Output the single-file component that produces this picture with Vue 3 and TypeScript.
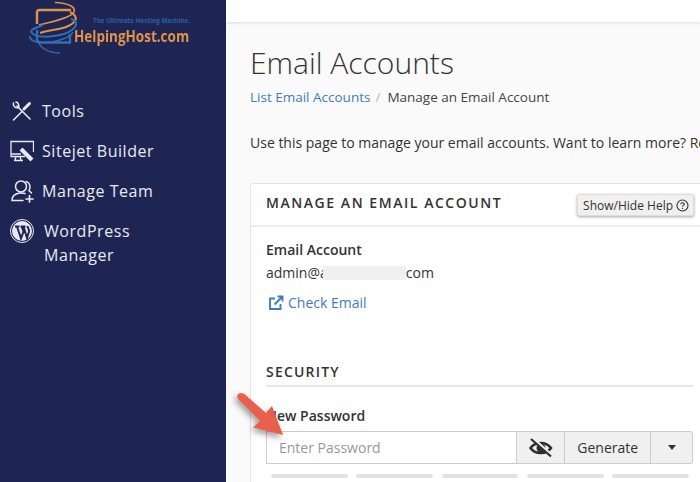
<script setup lang="ts">
const bars: number[] = [1, 2, 3, 4, 5]
</script>

<template>
  <div class="page">
    <aside class="sidebar">
      <div class="logo">
        <svg class="logo-mark" width="52" height="56" viewBox="0 0 52 56" fill="none">
          <path d="M10 24V12.5Q10 10 12.5 10H44" stroke="#e0924a" stroke-width="2.4" />
          <path d="M10 30V39.5Q10 42.5 13 42.5H43V34" stroke="#2f6fb5" stroke-width="2.4" />
          <path d="M28 2.5C41 3 49 7 47 12C44 18 23 22 12 25" stroke="#e0924a" stroke-width="1.6" />
          <path d="M43 12C53 17 49 23 39 27C31 30 21 30 13 33" stroke="#e0924a" stroke-width="2" />
          <path d="M44 19C55 22 47 32 33 35C23 37 9 38 5 33C2 30 8 28 16 25" stroke="#2f6fb5" stroke-width="2" />
          <path d="M3 36C2 44 21 44 33 40C40 38 44 36 46 32" stroke="#2f6fb5" stroke-width="1.6" />
          <path d="M11 40C12 48 22 53 33 53" stroke="#2f6fb5" stroke-width="1.4" />
        </svg>
        <div class="logo-text">
          <div class="tagline">The Ultimate Hosting Machine.</div>
          <div class="brand">HelpingHost.com</div>
        </div>
      </div>
      <nav class="nav">
        <a class="nav-item">
          <svg class="nav-icon" viewBox="0 0 24 24" fill="none" stroke="#e8eaf2" stroke-width="1.6" stroke-linecap="round">
            <path d="M7 7L20 20" />
            <path d="M3.5 21L12 12.5" />
            <path d="M14 10L19.5 4.5" stroke-width="3" />
            <path d="M3.5 4C2.5 7 5.5 9.5 8.5 8.5C9.5 6 8 3.5 6 3" />
          </svg>
          <span>Tools</span>
        </a>
        <a class="nav-item">
          <svg class="nav-icon" viewBox="0 0 24 24" fill="none" stroke="#e8eaf2" stroke-width="1.3">
            <path d="M15 17.5H1V2.5H23.5V13" />
            <path d="M1 15H11M6 17.5L5 21M10 17.5L11 21M4 21.5H13" />
            <path d="M12.5 9.5L22.5 19.5L20.5 21.5L10.5 11.5Z" fill="#e8eaf2" />
          </svg>
          <span>Sitejet Builder</span>
        </a>
        <a class="nav-item">
          <svg class="nav-icon" viewBox="0 0 24 24" fill="none" stroke="#e8eaf2" stroke-width="1.5" stroke-linecap="round">
            <circle cx="11" cy="7.5" r="5.5" />
            <path d="M16 2.5C20 3.5 21 8 19 11.5L21.5 14" />
            <path d="M15 14.5C9 13 2 15 2 21.5H13" />
            <path d="M19.5 16.5V23M16 20H23" stroke-width="1.7" />
          </svg>
          <span>Manage Team</span>
        </a>
        <a class="nav-item wp">
          <svg class="nav-icon" viewBox="0 0 24 24">
            <circle cx="12" cy="12" r="11.5" fill="none" stroke="#e8eaf2" stroke-width="1" />
            <circle cx="12" cy="12" r="10" fill="#e8eaf2" />
            <path d="M5 7.5H9.5M7 7.5L11 19.5L13.5 12.5L11.5 7.5M10.5 7.5H15.5M13.5 7.5L17 19L19 12.5C19.5 10 17.5 9 17.5 7" fill="none" stroke="#1f2553" stroke-width="2" />
          </svg>
          <span>WordPress<br />Manager</span>
        </a>
      </nav>
    </aside>

    <main class="main">
      <div class="topbar"></div>
      <div class="content">
        <h1 class="title">Email Accounts</h1>
        <div class="crumbs">
          <a class="link">List Email Accounts</a>
          <span class="sep">/</span>
          <span>Manage an Email Account</span>
        </div>
        <p class="intro">Use this page to manage your email accounts. Want to learn more? Read the documentation.</p>

        <section class="card">
          <header class="card-head">
            <h2>MANAGE AN EMAIL ACCOUNT</h2>
            <button class="help">
              Show/Hide Help
              <svg width="13" height="13" viewBox="0 0 13 13" fill="none" stroke="#333" stroke-width="1.1">
                <circle cx="6.5" cy="6.5" r="5.5" />
                <path d="M4.7 5.2C4.8 3.2 8.3 3.2 8.3 5.1C8.3 6.4 6.5 6.3 6.5 7.8" />
                <path d="M6.5 8.8V10" />
              </svg>
            </button>
          </header>
          <div class="card-body">
            <div class="label">Email Account</div>
            <div class="account">admin@a<span class="redact"></span>com</div>
            <a class="check link">
              <svg width="16" height="16" viewBox="0 0 16 16" fill="none" stroke="#3e7cc0" stroke-width="1.9">
                <path d="M7 3.5H2V14H12.5V9" />
                <path d="M6.5 9.5L14 2M9.5 1.5H14.5V6.5" />
              </svg>
              Check Email
            </a>
            <h3 class="section">SECURITY</h3>
            <label class="label pw-label">New Password</label>
            <div class="input-group">
              <div class="input">Enter Password</div>
              <button class="addon eye">
                <svg width="24" height="20" viewBox="0 0 24 20" fill="none" stroke="#2e2e2e">
                  <path d="M1.5 10C6 3.5 17 3 22 10C17.5 16.5 6.5 17 1.5 10Z" stroke-width="2.6" />
                  <circle cx="12" cy="10" r="4.5" fill="#2e2e2e" stroke="none" />
                  <path d="M3.5 0.5L23 18" stroke="#f0f0f0" stroke-width="3.6" />
                  <path d="M2 1L22 18.5" stroke-width="2.2" />
                </svg>
              </button>
              <button class="addon generate">Generate</button>
              <button class="addon caret"><i></i></button>
            </div>
            <div class="strength">
              <span v-for="b in bars" :key="b" class="bar"></span>
            </div>
          </div>
        </section>
      </div>
    </main>

    <svg class="arrow" width="62" height="60" viewBox="0 0 62 60">
      <defs>
        <filter id="arrow-shadow" x="-30%" y="-30%" width="170%" height="170%">
          <feDropShadow dx="-2" dy="3" stdDeviation="3" flood-color="#000" flood-opacity="0.4" />
        </filter>
      </defs>
      <path d="M5 0C2 0 0 3 2 6L24 28L17 34.5L47 42L36 13L30 20L9 1.5Q7 0 5 0Z" fill="#e8604c" filter="url(#arrow-shadow)" />
    </svg>
  </div>
</template>

<style>
html,
body {
  margin: 0;
  background: #fafafa;
}
</style>

<style scoped>
.page {
  position: relative;
  display: flex;
  width: 700px;
  height: 482px;
  overflow: hidden;
  font-family: "Open Sans", "Liberation Sans", sans-serif;
  font-size: 14px;
  color: #333;
  background: #fafafa;
}
.sidebar {
  flex: 0 0 226px;
  background: #1f2553;
  color: #e8eaf2;
}
.logo {
  display: flex;
  height: 91px;
  padding-left: 27px;
  box-sizing: border-box;
}
.logo-mark {
  flex: none;
  filter: blur(0.3px);
}
.logo-text {
  margin-left: -5px;
  padding-top: 15px;
  white-space: nowrap;
}
.tagline {
  margin-left: 19px;
  font-size: 6.3px;
  font-weight: 700;
  line-height: 11px;
  color: #2a5ea6;
}
.brand {
  font-size: 15.5px;
  font-weight: 700;
  line-height: 20px;
  color: #e0924a;
  transform: scaleX(0.87);
  transform-origin: left center;
}
.nav {
  display: flex;
  flex-direction: column;
}
.nav-item {
  display: flex;
  align-items: center;
  height: 40px;
  padding-left: 10px;
  font-size: 16px;
  letter-spacing: 0.55px;
  line-height: 24px;
}
.nav-icon {
  flex: none;
  width: 24px;
  height: 24px;
  margin-right: 8px;
}
.nav-item.wp {
  align-items: flex-start;
  height: 48px;
  padding-top: 8px;
}
.nav-item.wp .nav-icon {
  margin-right: 10px;
}
.main {
  flex: 1;
  min-width: 0;
  display: flex;
  flex-direction: column;
}
.topbar {
  flex: none;
  height: 22px;
  background: #fff;
  box-shadow: 0 1px 3px rgba(0, 0, 0, 0.12);
}
.content {
  padding: 0 0 0 24px;
}
.title {
  margin: 20px 0 0;
  font-size: 30px;
  font-weight: 300;
  line-height: 42px;
  color: #333;
}
.crumbs {
  display: flex;
  margin-top: 1px;
  font-size: 13.5px;
  line-height: 24px;
  color: #444;
}
.link {
  color: #3e7cc0;
}
.sep {
  margin: 0 7px 0 5px;
  color: #bbb;
}
.intro {
  margin: 22px 0 0;
  width: 474px;
  overflow: hidden;
  line-height: 24px;
  white-space: nowrap;
  color: #333;
}
.card {
  width: 459px;
  height: 400px;
  margin-top: 28px;
  box-sizing: border-box;
  background: #fff;
  border: 1px solid #e4e4e4;
  border-radius: 3px;
}
.card-head {
  display: flex;
  justify-content: space-between;
  align-items: flex-start;
  height: 43px;
  box-sizing: border-box;
  padding: 0 14px 0 15px;
  border-bottom: 2px solid #eee;
}
.card-head h2 {
  margin: 8px 0 0;
  font-size: 14px;
  font-weight: 600;
  letter-spacing: 1.55px;
  line-height: 22px;
  color: #333;
}
.help {
  display: flex;
  align-items: center;
  gap: 3px;
  height: 22px;
  margin-top: 10px;
  padding: 0 4px 0 5px;
  font: inherit;
  font-size: 12px;
  color: #333;
  background: #f0f0f0;
  border: 1px solid #ddd;
  border-radius: 2px;
  box-shadow: 0 1px 3px rgba(0, 0, 0, 0.35);
}
.card-body {
  padding: 11px 15px 0;
}
.label {
  display: block;
  font-weight: 600;
  line-height: 24px;
  color: #333;
}
.account {
  line-height: 22px;
}
.redact {
  display: inline-block;
  vertical-align: top;
  width: 83px;
  height: 14px;
  margin: 4px 0 0 -5px;
  background: #f0f0f0;
}
.check {
  display: flex;
  align-items: center;
  gap: 4px;
  margin-top: 7px;
  line-height: 24px;
  padding-left: 2px;
}
.section {
  margin: 46px 0 0;
  padding-bottom: 2px;
  font-size: 14px;
  font-weight: 600;
  letter-spacing: 1.2px;
  line-height: 22px;
  color: #333;
  border-bottom: 2px solid #e6e6e6;
}
.pw-label {
  margin-top: 17px;
}
.input-group {
  display: flex;
  height: 33px;
  margin-top: 3px;
}
.input {
  width: 251px;
  box-sizing: border-box;
  padding-left: 12px;
  line-height: 31px;
  color: #999;
  background: #fff;
  border: 1px solid #ccc;
  border-right: 0;
}
.addon {
  display: flex;
  align-items: center;
  justify-content: center;
  box-sizing: border-box;
  padding: 0;
  font: inherit;
  color: #333;
  background: #f0f0f0;
  border: 1px solid #ccc;
}
.eye {
  width: 49px;
}
.generate {
  width: 86px;
  border-left: 0;
}
.caret {
  width: 42px;
  border-left: 0;
  border-radius: 0 3px 3px 0;
}
.caret i {
  border-top: 5px solid #333;
  border-left: 4.5px solid transparent;
  border-right: 4.5px solid transparent;
}
.strength {
  display: grid;
  grid-template-columns: repeat(5, 1fr);
  gap: 8.5px;
  margin-top: 10px;
  padding: 0 4px 0 5px;
}
.bar {
  height: 4px;
  border-radius: 2px;
  background: #e2e2e2;
}
.arrow {
  position: absolute;
  left: 236px;
  top: 393px;
  overflow: visible;
}
</style>
